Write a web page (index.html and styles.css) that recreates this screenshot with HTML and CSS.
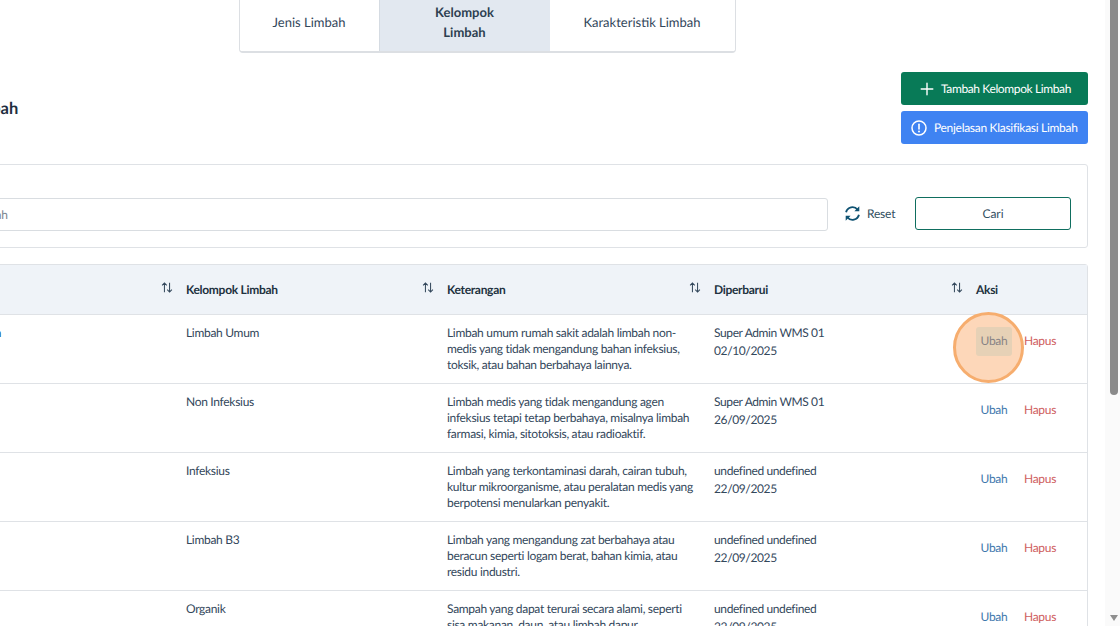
FILE: index.html
```html
<!DOCTYPE html>
<html lang="id">
<head>
<meta charset="utf-8">
<title>Kelompok Limbah</title>
<link rel="stylesheet" href="styles.css">
</head>
<body>
<div class="viewport">
  <main class="page">
    <nav class="tabs">
      <button class="tab tab-a">Jenis Limbah</button>
      <button class="tab tab-b active">Kelompok<br>Limbah</button>
      <button class="tab tab-c">Karakteristik Limbah</button>
    </nav>

    <header class="head">
      <h1 class="title">Kelompok Limbah</h1>
      <div class="head-actions">
        <button class="btn btn-green">
          <svg class="ico" viewBox="0 0 16 16"><path d="M8 2.2v11.6M2.2 8h11.6" fill="none" stroke="#fff" stroke-width="1.4" stroke-linecap="round"/></svg>
          Tambah Kelompok Limbah
        </button>
        <button class="btn btn-blue">
          <svg class="ico" viewBox="0 0 16 16"><circle cx="8" cy="8" r="7" fill="none" stroke="#fff" stroke-width="1.5"/><path d="M8 4.2v4.8" stroke="#fff" stroke-width="1.6" stroke-linecap="round"/><circle cx="8" cy="11.5" r="1" fill="#fff"/></svg>
          Penjelasan Klasifikasi Limbah
        </button>
      </div>
    </header>

    <section class="search">
      <input class="search-input" placeholder="Cari Kelompok Limbah">
      <button class="reset">
        <svg class="reset-ico" viewBox="0 0 18 18"><path d="M2.2 7.6A6.9 6.9 0 0 1 14.4 5M15.8 10.4A6.9 6.9 0 0 1 3.6 13" fill="none" stroke="#0f5272" stroke-width="2"/><path d="M16.2 1.4v5.2H11zM1.8 16.6v-5.2H7z" fill="#0f5272"/></svg>
        Reset
      </button>
      <button class="cari">Cari</button>
    </section>

    <section class="table-card">
      <table class="table">
        <thead>
          <tr>
            <th class="col-1"><span class="th"><span></span><svg class="sort" viewBox="0 0 14 13"><path d="M4 12V1.5M1.3 4 4 1.2 6.7 4M10 1v10.5M7.3 9l2.7 2.8L12.7 9" fill="none" stroke="#33475b" stroke-width="1.2"/></svg></span></th>
            <th class="col-2"><span class="th">Kelompok Limbah<svg class="sort" viewBox="0 0 14 13"><path d="M4 12V1.5M1.3 4 4 1.2 6.7 4M10 1v10.5M7.3 9l2.7 2.8L12.7 9" fill="none" stroke="#33475b" stroke-width="1.2"/></svg></span></th>
            <th class="col-3"><span class="th">Keterangan<svg class="sort" viewBox="0 0 14 13"><path d="M4 12V1.5M1.3 4 4 1.2 6.7 4M10 1v10.5M7.3 9l2.7 2.8L12.7 9" fill="none" stroke="#33475b" stroke-width="1.2"/></svg></span></th>
            <th class="col-4"><span class="th">Diperbarui<svg class="sort" viewBox="0 0 14 13"><path d="M4 12V1.5M1.3 4 4 1.2 6.7 4M10 1v10.5M7.3 9l2.7 2.8L12.7 9" fill="none" stroke="#33475b" stroke-width="1.2"/></svg></span></th>
            <th class="col-5">Aksi</th>
          </tr>
        </thead>
        <tbody>
          <tr>
            <td class="first">Umum Satuan</td>
            <td>Limbah Umum</td>
            <td class="desc">Limbah umum rumah sakit adalah limbah non-medis yang tidak mengandung bahan infeksius, toksik, atau bahan berbahaya lainnya.</td>
            <td class="upd">Super Admin WMS 01<br>02/10/2025</td>
            <td class="acts"><div class="acts-row"><a class="ubah hot">Ubah<span class="spot"></span></a><a class="hapus">Hapus</a></div></td>
          </tr>
          <tr>
            <td class="first"></td>
            <td>Non Infeksius</td>
            <td class="desc">Limbah medis yang tidak mengandung agen infeksius tetapi tetap berbahaya, misalnya limbah farmasi, kimia, sitotoksis, atau radioaktif.</td>
            <td class="upd">Super Admin WMS 01<br>26/09/2025</td>
            <td class="acts"><div class="acts-row"><a class="ubah">Ubah</a><a class="hapus">Hapus</a></div></td>
          </tr>
          <tr>
            <td class="first"></td>
            <td>Infeksius</td>
            <td class="desc">Limbah yang terkontaminasi darah, cairan tubuh, kultur mikroorganisme, atau peralatan medis yang berpotensi menularkan penyakit.</td>
            <td class="upd">undefined undefined<br>22/09/2025</td>
            <td class="acts"><div class="acts-row"><a class="ubah">Ubah</a><a class="hapus">Hapus</a></div></td>
          </tr>
          <tr>
            <td class="first"></td>
            <td>Limbah B3</td>
            <td class="desc">Limbah yang mengandung zat berbahaya atau beracun seperti logam berat, bahan kimia, atau residu industri.</td>
            <td class="upd">undefined undefined<br>22/09/2025</td>
            <td class="acts"><div class="acts-row"><a class="ubah">Ubah</a><a class="hapus">Hapus</a></div></td>
          </tr>
          <tr>
            <td class="first"></td>
            <td>Organik</td>
            <td class="desc">Sampah yang dapat terurai secara alami, seperti sisa makanan, daun, atau limbah dapur.</td>
            <td class="upd">undefined undefined<br>22/09/2025</td>
            <td class="acts"><div class="acts-row"><a class="ubah">Ubah</a><a class="hapus">Hapus</a></div></td>
          </tr>
        </tbody>
      </table>
    </section>
  </main>

  <aside class="scrollbar">
    <span class="thumb"></span>
    <span class="arrow"></span>
  </aside>
</div>
</body>
</html>
```

FILE: styles.css
```css
* { box-sizing: border-box; }
html, body { margin: 0; height: 100%; overflow: hidden; background: #fff; }
body {
  font-family: "Lato", "Liberation Sans", sans-serif;
  color: #2d3f50;
  text-rendering: geometricPrecision;
}
button, input { font-family: inherit; text-rendering: inherit; }

.viewport { width: 1120px; height: 626px; display: flex; overflow: hidden; }

.page {
  flex: none;
  width: 1202px;
  margin-left: -114px;
  margin-top: -7px;
  display: flex;
  flex-direction: column;
}

/* tabs */
.tabs {
  align-self: center;
  display: flex;
  width: 497px;
  height: 60px;
  flex: none;
  border: 1px solid #dcdfe3;
  border-bottom-width: 2px;
  border-radius: 4px;
  overflow: hidden;
  background: #fff;
}
.tab {
  border: 0;
  background: #fff;
  color: #33475b;
  font-size: 13px;
  line-height: 20px;
  padding: 0 0 2px;
}
.tab-a { width: 139px; }
.tab-b { width: 171px; }
.tab-c { flex: 1; }
.tab.active {
  background: #e2e8f0;
  border-left: 1px solid #d5dbe2;
  color: #2d3f50;
  font-weight: 700;
}

/* heading */
.head {
  flex: none;
  display: flex;
  justify-content: space-between;
  align-items: flex-start;
  margin-top: 19px;
}
.title {
  margin: 26px 0 0;
  font-size: 16.5px;
  line-height: 20px;
  font-weight: 700;
  color: #1f2f3f;
  width: 130px;
  white-space: nowrap;
}
.head-actions { display: flex; flex-direction: column; gap: 6px; width: 187px; }
.btn {
  height: 33px;
  border: 0;
  border-radius: 3px;
  color: #fff;
  font-size: 12px;
  letter-spacing: -.3px;
  display: flex;
  align-items: center;
  gap: 7px;
  padding: 0;
  white-space: nowrap;
}
.btn-green { background: #087a57; padding-left: 18px; gap: 6px; letter-spacing: -.38px; }
.btn-blue { background: #3f83f2; padding-left: 10px; }
.ico { width: 16px; height: 16px; flex: none; }

/* search */
.search {
  flex: none;
  margin-top: 20px;
  height: 84px;
  border: 1px solid #dfe2e6;
  border-radius: 3px;
  display: flex;
  align-items: center;
  padding: 14px 16px 0 0;
}
.search-input {
  flex: 1;
  height: 33px;
  border: 1px solid #d9dde1;
  border-radius: 3px;
  font-size: 12px;
  letter-spacing: -.3px;
  padding: 0 7px;
  margin-top: 2px;
}
.search-input::placeholder { color: #7b858f; }
.reset {
  border: 0;
  background: none;
  color: #33505f;
  font-size: 12px;
  letter-spacing: -.2px;
  display: flex;
  align-items: center;
  gap: 6px;
  margin-left: 16px;
  padding: 0;
  width: 52px;
  flex: none;
  white-space: nowrap;
}
.reset-ico { width: 17px; height: 17px; flex: none; }
.cari {
  width: 156px;
  height: 33px;
  flex: none;
  margin-left: 19px;
  border: 1px solid #0f6e5f;
  border-radius: 3px;
  background: #fff;
  color: #33505f;
  font-size: 12px;
}

/* table */
.table-card {
  margin-top: 16px;
  border: 1px solid #dfe2e6;
  border-radius: 3px;
  flex: none;
}
.table {
  width: 100%;
  border-collapse: collapse;
  table-layout: fixed;
  font-size: 12px;
  letter-spacing: -.3px;
}
.col-1 { width: 299px; }
.col-2 { width: 261px; }
.col-3 { width: 267px; }
.col-4 { width: 262px; }
thead tr { height: 49px; background: #eff3f8; }
th {
  text-align: left;
  font-weight: 700;
  font-size: 12px;
  padding: 0 13px 0 0;
  color: #22323f;
}
.th { display: flex; justify-content: space-between; align-items: center; }
.sort { width: 12px; height: 13px; flex: none; margin-top: -3px; }
tbody tr { height: 69px; border-top: 1px solid #dfe2e6; }
td { padding: 10px 13px 0 0; color: #33475b; vertical-align: top; line-height: 16.3px; }
.first { text-align: right; padding-right: 185px; color: #1f5a7a; white-space: nowrap; font-weight: 700; }
.desc { line-height: 16.4px; padding-right: 17px; }
.upd { line-height: 18px; padding-top: 9px; letter-spacing: -.38px; }
.acts { padding: 12px 0 0; }
.acts-row { display: flex; align-items: center; gap: 12px; }
.ubah {
  position: relative;
  width: 36px;
  height: 29px;
  border-radius: 3px;
  display: flex;
  align-items: center;
  justify-content: center;
  color: #3f78ad;
}
.hapus { color: #cf5f5f; }
.hot { background: #daf6fa; }
.spot {
  position: absolute;
  left: -23px;
  top: -15px;
  width: 71px;
  height: 71px;
  border-radius: 50%;
  border: 3.5px solid #f6ad6e;
  background: rgba(250, 150, 70, .38);
}

/* scrollbar */
.scrollbar {
  position: relative;
  flex: 1;
  margin-left: 17px;
  background: #fafafa;
}
.thumb {
  position: absolute;
  left: 5px;
  top: 0;
  width: 8px;
  height: 395px;
  background: #8a8a8a;
  border-radius: 0 0 4px 4px;
}
.arrow {
  position: absolute;
  left: 5px;
  bottom: 5px;
  border-left: 4px solid transparent;
  border-right: 4px solid transparent;
  border-top: 6px solid #8f8f8f;
}
```
